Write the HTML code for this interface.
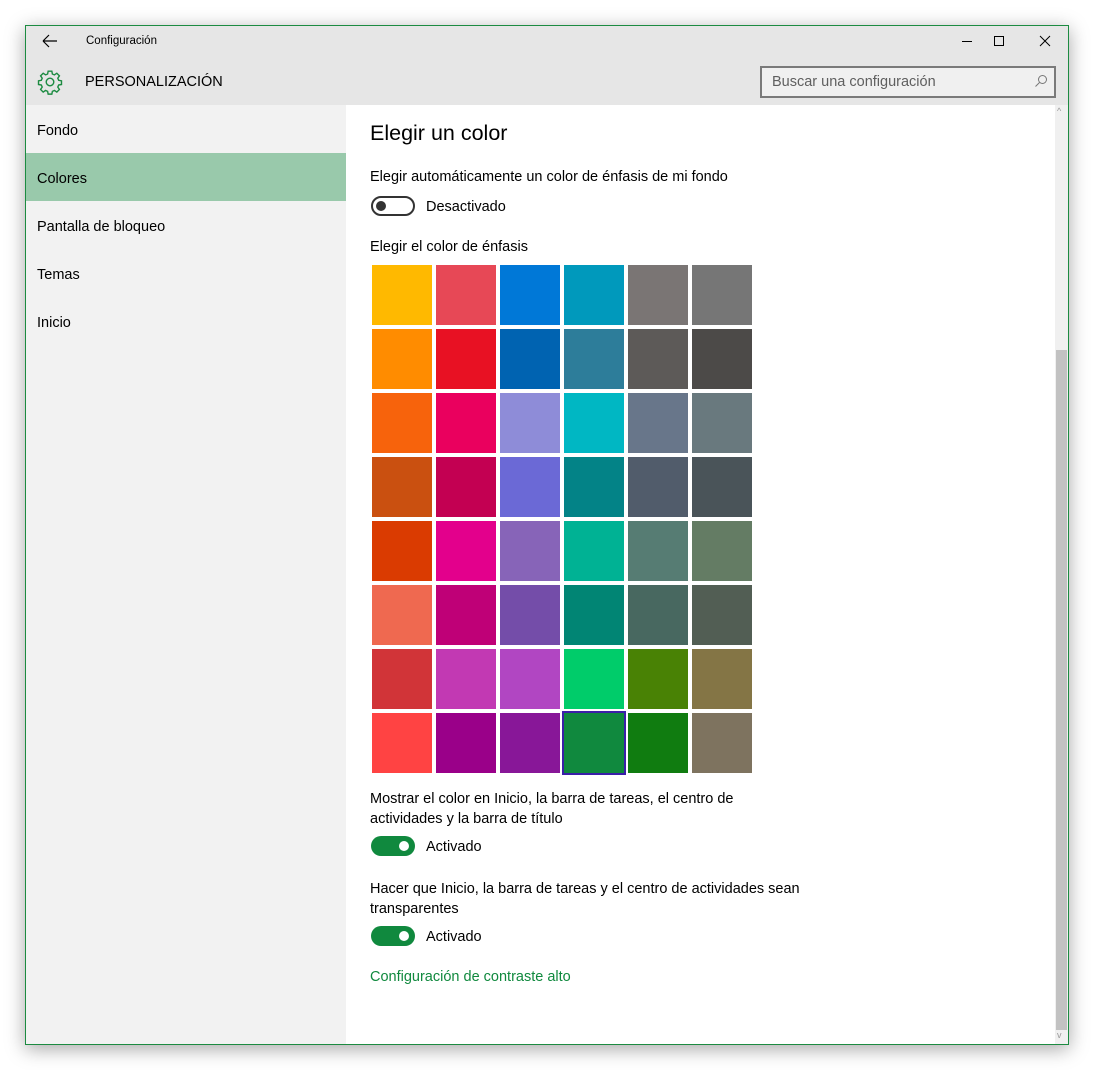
<!DOCTYPE html>
<html><head><meta charset="utf-8"><style>
*{margin:0;padding:0;box-sizing:border-box}
body{width:1094px;height:1070px;background:#fff;position:relative;font-family:"Liberation Sans",sans-serif;color:#000;overflow:hidden}
.a{position:absolute;white-space:nowrap}
.win{position:absolute;left:25px;top:25px;width:1044px;height:1020px;border:1px solid #1c8b41;box-shadow:0 4px 18px rgba(0,0,0,.35);background:#fff;overflow:hidden}
.t{font-size:14.5px}
.tog{position:absolute;width:44px;height:20px;border-radius:10px}
.c{position:absolute;width:60px;height:60px}
</style></head><body>
<div class="win">
<div class="a" style="left:0;top:0;width:1042px;height:79px;background:#e6e6e6"></div>
<div class="a" style="left:0;top:79px;width:320px;height:940px;background:#f2f2f2"></div>
<div class="a" style="left:0;top:127px;width:320px;height:48px;background:#99c9ab"></div>
<svg class="a" style="left:14px;top:8px" width="20" height="14" viewBox="0 0 20 14"><path d="M3 7H17M3 7L9 1M3 7L9 13" stroke="#000" stroke-width="1.2" fill="none"/></svg>
<div class="a" style="left:60px;top:9px;font-size:11.5px">Configuración</div>
<svg class="a" style="left:934px;top:8px" width="14" height="14"><path d="M2 7.5H12" stroke="#000"/></svg>
<svg class="a" style="left:966px;top:8px" width="14" height="14"><rect x="2.5" y="2.5" width="9" height="9" fill="none" stroke="#000"/></svg>
<svg class="a" style="left:1012px;top:8px" width="14" height="14"><path d="M2 2L12 12M12 2L2 12" stroke="#000"/></svg>
<svg class="a" style="left:11px;top:43px" width="26" height="26" viewBox="0 0 24 24"><g fill="none" stroke="#1c8b41" stroke-width="1.3"><circle cx="12" cy="12" r="3.5"/><path d="M10.3 2h3.4l.5 2.6 1.9.8 2.2-1.5 2.4 2.4-1.5 2.2.8 1.9 2.6.5v3.4l-2.6.5-.8 1.9 1.5 2.2-2.4 2.4-2.2-1.5-1.9.8-.5 2.6h-3.4l-.5-2.6-1.9-.8-2.2 1.5-2.4-2.4 1.5-2.2-.8-1.9-2.6-.5v-3.4l2.6-.5.8-1.9-1.5-2.2 2.4-2.4 2.2 1.5 1.9-.8z"/></g></svg>
<div class="a" style="left:59px;top:48px;font-size:14.5px;font-weight:500">PERSONALIZACIÓN</div>
<div class="a" style="left:734px;top:40px;width:296px;height:32px;border:2px solid #7a7a7a;background:#f0f0f0"></div>
<div class="a" style="left:746px;top:48px;font-size:14.5px;color:#5f5f5f">Buscar una configuración</div>
<svg class="a" style="left:1008px;top:48px" width="14" height="14"><circle cx="8.5" cy="5.5" r="4" fill="none" stroke="#777"/><path d="M5.5 8.5L1.5 12.5" stroke="#777"/></svg>
<div class="a t" style="left:11px;top:97px">Fondo</div>
<div class="a t" style="left:11px;top:145px">Colores</div>
<div class="a t" style="left:11px;top:193px">Pantalla de bloqueo</div>
<div class="a t" style="left:11px;top:241px">Temas</div>
<div class="a t" style="left:11px;top:289px">Inicio</div>
<div class="a" style="left:1029px;top:79px;width:13px;height:940px;background:#f0f0f0"></div>
<div class="a" style="left:1030px;top:324px;width:11px;height:680px;background:#c2c2c2"></div>
<div class="a" style="left:1031px;top:80px;font-size:9px;color:#999">^</div>
<div class="a" style="left:1031px;top:1004px;font-size:9px;color:#999">v</div>
<div class="a" style="left:344px;top:95px;font-size:21.5px">Elegir un color</div>
<div class="a t" style="left:344px;top:143px">Elegir automáticamente un color de énfasis de mi fondo</div>
<div class="tog" style="left:345px;top:170px;border:2px solid #333"></div>
<div class="a" style="left:350px;top:175px;width:10px;height:10px;border-radius:5px;background:#333"></div>
<div class="a t" style="left:400px;top:173px">Desactivado</div>
<div class="a t" style="left:344px;top:213px">Elegir el color de énfasis</div>
<div class="a t" style="left:344px;top:763px;line-height:20px;white-space:normal;width:420px">Mostrar el color en Inicio, la barra de tareas, el centro de actividades y la barra de título</div>
<div class="tog" style="left:345px;top:810px;background:#10893e"></div>
<div class="a" style="left:373px;top:815px;width:10px;height:10px;border-radius:5px;background:#fff"></div>
<div class="a t" style="left:400px;top:813px">Activado</div>
<div class="a t" style="left:344px;top:853px;line-height:20px;white-space:normal;width:460px">Hacer que Inicio, la barra de tareas y el centro de actividades sean transparentes</div>
<div class="tog" style="left:345px;top:900px;background:#10893e"></div>
<div class="a" style="left:373px;top:905px;width:10px;height:10px;border-radius:5px;background:#fff"></div>
<div class="a t" style="left:400px;top:903px">Activado</div>
<div class="a t" style="left:344px;top:943px;color:#10893e">Configuración de contraste alto</div>
<div style="position:absolute;left:0;top:-1px">
<div class="c" style="left:346px;top:240px;background:#FFB900"></div><div class="c" style="left:410px;top:240px;background:#E74856"></div><div class="c" style="left:474px;top:240px;background:#0078D7"></div><div class="c" style="left:538px;top:240px;background:#0099BC"></div><div class="c" style="left:602px;top:240px;background:#7A7574"></div><div class="c" style="left:666px;top:240px;background:#767676"></div>
<div class="c" style="left:346px;top:304px;background:#FF8C00"></div><div class="c" style="left:410px;top:304px;background:#E81123"></div><div class="c" style="left:474px;top:304px;background:#0063B1"></div><div class="c" style="left:538px;top:304px;background:#2D7D9A"></div><div class="c" style="left:602px;top:304px;background:#5D5A58"></div><div class="c" style="left:666px;top:304px;background:#4C4A48"></div>
<div class="c" style="left:346px;top:368px;background:#F7630C"></div><div class="c" style="left:410px;top:368px;background:#EA005E"></div><div class="c" style="left:474px;top:368px;background:#8E8CD8"></div><div class="c" style="left:538px;top:368px;background:#00B7C3"></div><div class="c" style="left:602px;top:368px;background:#68768A"></div><div class="c" style="left:666px;top:368px;background:#69797E"></div>
<div class="c" style="left:346px;top:432px;background:#CA5010"></div><div class="c" style="left:410px;top:432px;background:#C30052"></div><div class="c" style="left:474px;top:432px;background:#6B69D6"></div><div class="c" style="left:538px;top:432px;background:#038387"></div><div class="c" style="left:602px;top:432px;background:#515C6B"></div><div class="c" style="left:666px;top:432px;background:#4A5459"></div>
<div class="c" style="left:346px;top:496px;background:#DA3B01"></div><div class="c" style="left:410px;top:496px;background:#E3008C"></div><div class="c" style="left:474px;top:496px;background:#8764B8"></div><div class="c" style="left:538px;top:496px;background:#00B294"></div><div class="c" style="left:602px;top:496px;background:#567C73"></div><div class="c" style="left:666px;top:496px;background:#647C64"></div>
<div class="c" style="left:346px;top:560px;background:#EF6950"></div><div class="c" style="left:410px;top:560px;background:#BF0077"></div><div class="c" style="left:474px;top:560px;background:#744DA9"></div><div class="c" style="left:538px;top:560px;background:#018574"></div><div class="c" style="left:602px;top:560px;background:#486860"></div><div class="c" style="left:666px;top:560px;background:#525E54"></div>
<div class="c" style="left:346px;top:624px;background:#D13438"></div><div class="c" style="left:410px;top:624px;background:#C239B3"></div><div class="c" style="left:474px;top:624px;background:#B146C2"></div><div class="c" style="left:538px;top:624px;background:#00CC6A"></div><div class="c" style="left:602px;top:624px;background:#498205"></div><div class="c" style="left:666px;top:624px;background:#847545"></div>
<div class="c" style="left:346px;top:688px;background:#FF4343"></div><div class="c" style="left:410px;top:688px;background:#9A0089"></div><div class="c" style="left:474px;top:688px;background:#881798"></div><div class="c" style="left:536px;top:686px;width:64px;height:64px;background:#10893E;border:2px solid #3a1fa8"></div><div class="c" style="left:602px;top:688px;background:#107C10"></div><div class="c" style="left:666px;top:688px;background:#7E735F"></div>
</div>
</div>
</body></html>
